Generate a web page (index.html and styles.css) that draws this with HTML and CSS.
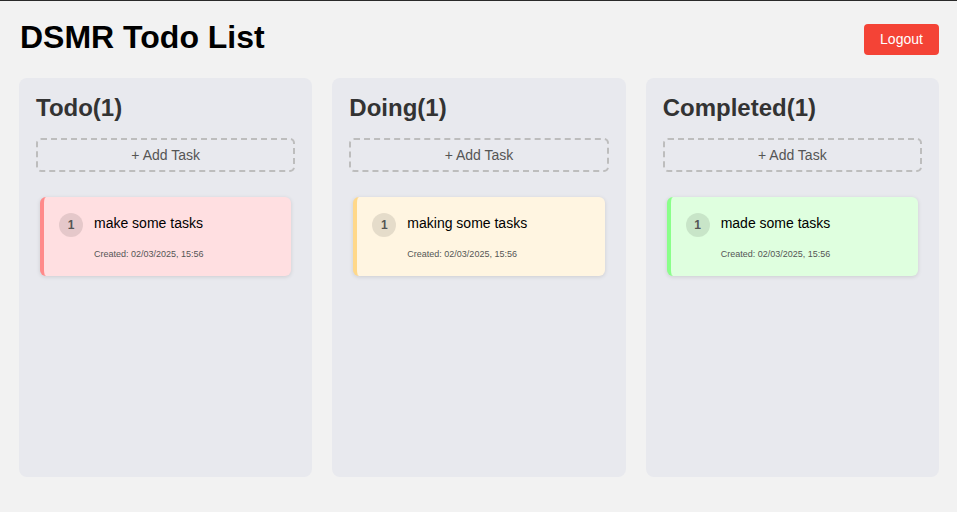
FILE: index.html
```html
<!DOCTYPE html>
<html lang="en">
<head>
<meta charset="utf-8">
<title>DSMR Todo List</title>
<link rel="stylesheet" href="styles.css">
</head>
<body>
<div class="app">
  <header class="header">
    <h1 class="title">DSMR Todo List</h1>
    <button class="logout">Logout</button>
  </header>
  <main class="board">
    <section class="column">
      <h2 class="column-title">Todo(1)</h2>
      <button class="add-task">+ Add Task</button>
      <div class="task-list">
        <div class="task task-todo">
          <span class="task-num">1</span>
          <div class="task-body">
            <div class="task-text">make some tasks</div>
            <div class="task-date">Created: 02/03/2025, 15:56</div>
          </div>
        </div>
      </div>
    </section>
    <section class="column">
      <h2 class="column-title">Doing(1)</h2>
      <button class="add-task">+ Add Task</button>
      <div class="task-list">
        <div class="task task-doing">
          <span class="task-num">1</span>
          <div class="task-body">
            <div class="task-text">making some tasks</div>
            <div class="task-date">Created: 02/03/2025, 15:56</div>
          </div>
        </div>
      </div>
    </section>
    <section class="column">
      <h2 class="column-title">Completed(1)</h2>
      <button class="add-task">+ Add Task</button>
      <div class="task-list">
        <div class="task task-done">
          <span class="task-num">1</span>
          <div class="task-body">
            <div class="task-text">made some tasks</div>
            <div class="task-date">Created: 02/03/2025, 15:56</div>
          </div>
        </div>
      </div>
    </section>
  </main>
</div>
</body>
</html>
```
FILE: styles.css
```css
* { box-sizing: border-box; }
html, body { margin: 0; padding: 0; }
body {
  background: #f2f2f2;
  font-family: "Liberation Sans", Arial, sans-serif;
  border-top: 1px solid #2a2a2a;
  height: 512px;
}
.app {
  padding: 18px 18px 0 19px;
}
.header {
  display: flex;
  justify-content: space-between;
  align-items: center;
  padding-left: 1px;
}
.title {
  margin: 0;
  font-size: 32px;
  font-weight: bold;
  color: #000;
}
.logout {
  margin-top: 3px;
  background: #f44336;
  color: #fff;
  border: none;
  border-radius: 4px;
  font-family: inherit;
  font-size: 14px;
  height: 31px;
  width: 75px;
  padding: 0;
}
.board {
  margin-top: 22px;
  display: grid;
  grid-template-columns: repeat(3, 1fr);
  gap: 20px;
}
.column {
  background: #e8e9ee;
  border-radius: 8px;
  height: 399px;
  padding: 16px 17px 16px 17px;
}
.column-title {
  margin: 0 0 16px 0;
  font-size: 24px;
  font-weight: bold;
  color: #333;
}
.add-task {
  display: block;
  width: 100%;
  height: 34px;
  background: transparent;
  border: 2px dashed #bdbdbd;
  border-radius: 5px;
  color: #555;
  font-family: inherit;
  font-size: 14px;
  padding: 0;
}
.task-list {
  margin-top: 25px;
  padding: 0 4px;
}
.task {
  display: flex;
  align-items: flex-start;
  gap: 11px;
  border-radius: 6px;
  border-left: 4px solid;
  padding: 16px 15px 17px 15px;
  box-shadow: 0 1px 4px rgba(0,0,0,0.12);
}
.task-todo { background: #ffdfe1; border-left-color: #ff8a8a; }
.task-doing { background: #fff5e1; border-left-color: #ffd88a; }
.task-done { background: #dfffdf; border-left-color: #8aff8a; }
.task-num {
  flex: none;
  width: 24px;
  height: 24px;
  border-radius: 50%;
  background: rgba(0,0,0,0.1);
  color: #555;
  font-size: 12px;
  font-weight: bold;
  display: flex;
  align-items: center;
  justify-content: center;
}
.task-body {
  flex: 1;
  padding-top: 2px;
}
.task-text {
  font-size: 14px;
  color: #000;
  line-height: 16px;
}
.task-date {
  margin-top: 18px;
  font-size: 9px;
  color: #555;
}
```
